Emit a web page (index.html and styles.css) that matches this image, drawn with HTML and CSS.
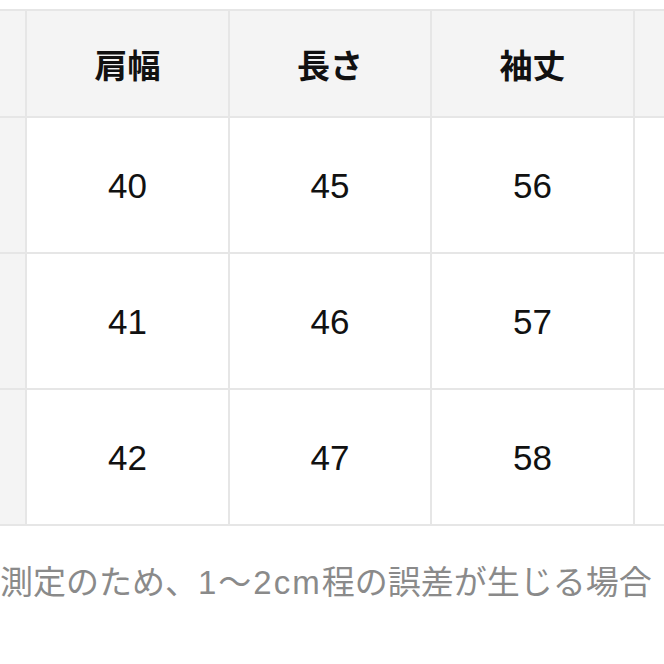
FILE: index.html
```html
<!DOCTYPE html>
<html lang="ja">
<head>
<meta charset="utf-8">
<link rel="stylesheet" href="styles.css">
</head>
<body>
<div class="page">
  <div class="size-table">
    <div class="cell head side"></div>
    <div class="cell head">肩幅</div>
    <div class="cell head">長さ</div>
    <div class="cell head">袖丈</div>
    <div class="cell head"></div>

    <div class="cell side"></div>
    <div class="cell num">40</div>
    <div class="cell num">45</div>
    <div class="cell num">56</div>
    <div class="cell num"></div>

    <div class="cell side"></div>
    <div class="cell num">41</div>
    <div class="cell num">46</div>
    <div class="cell num">57</div>
    <div class="cell num"></div>

    <div class="cell side"></div>
    <div class="cell num">42</div>
    <div class="cell num">47</div>
    <div class="cell num">58</div>
    <div class="cell num"></div>
  </div>
  <p class="note">測定のため、<span class="latin">1〜2cm</span>程の誤差が生じる場合</p>
</div>
</body>
</html>
```
FILE: styles.css
```css
html, body {
  margin: 0;
  padding: 0;
  background: #ffffff;
  overflow: hidden;
}
.page {
  width: 664px;
  height: 664px;
  overflow: hidden;
  padding-top: 9px;
  box-sizing: border-box;
}
.size-table {
  display: grid;
  grid-template-columns: 25px 201px 200px 201px 200px;
  grid-template-rows: 105px 134px 134px 134px;
  gap: 2px;
  padding: 2px 0;
  background: #e6e6e6;
  width: max-content;
}
.cell {
  display: flex;
  align-items: center;
  justify-content: center;
  background: #ffffff;
  color: #111111;
}
.head {
  background: #f4f4f4;
  font-family: "Noto Sans CJK JP", "Noto Sans", sans-serif;
  font-weight: 700;
  font-size: 33px;
}
.side {
  background: #f4f4f4;
}
.num {
  font-family: "Liberation Sans", Arial, sans-serif;
  font-size: 35px;
  padding-top: 2px;
}
.note {
  margin: 36px 0 0 0;
  font-family: "Noto Sans CJK JP", sans-serif;
  font-size: 33px;
  line-height: 36px;
  color: #8a8a8a;
  white-space: nowrap;
}
.latin {
  font-family: "Liberation Sans", "Noto Sans CJK JP", sans-serif;
  letter-spacing: 2px;
}
```
